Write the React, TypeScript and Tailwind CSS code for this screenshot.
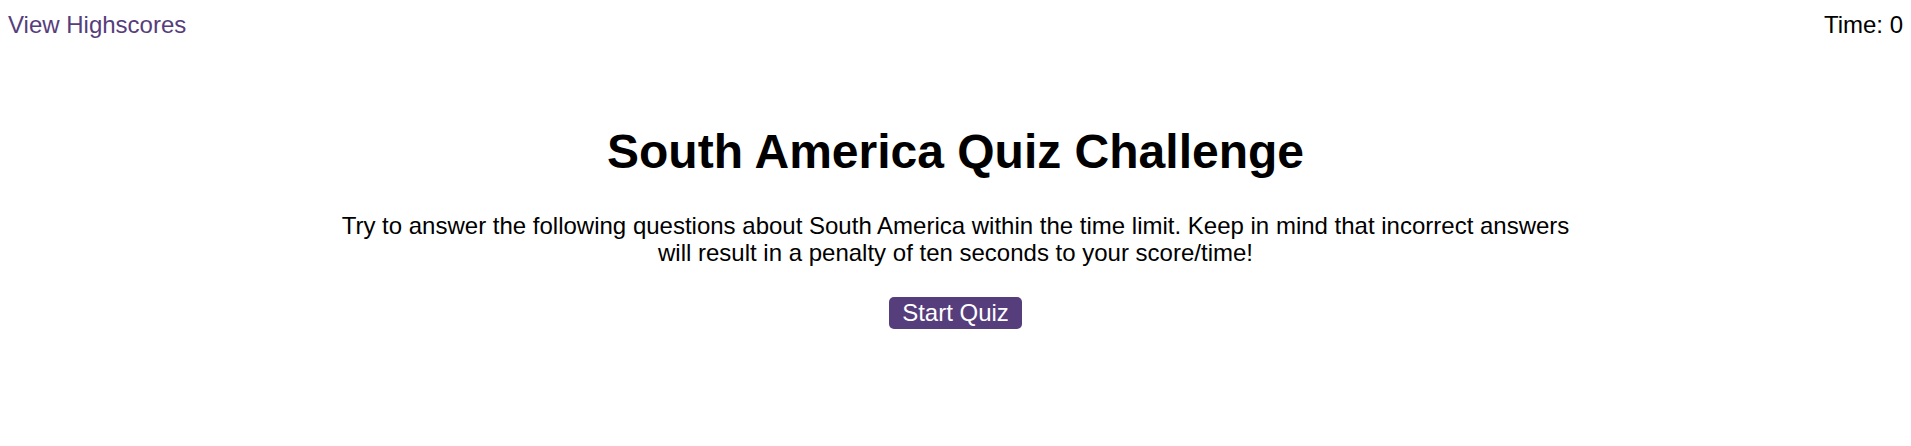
export default function App() {
  return (
    <div className="min-h-[446px] bg-white text-black" style={{ fontFamily: '"Liberation Sans", Arial, sans-serif' }}>
      <header className="flex justify-between pl-[8px] pr-[8px] pt-[11px] text-[24px] leading-[28px]">
        <a href="#" className="text-[#563d7c]">View Highscores</a>
        <span>Time: 0</span>
      </header>
      <main className="flex flex-col items-center">
        <h1 className="mt-[85px] text-[48px] leading-[55px] font-bold">South America Quiz Challenge</h1>
        <p className="mt-[33px] max-w-[1240px] text-center text-[24px] leading-[27px]">
          Try to answer the following questions about South America within the time limit. Keep in mind that incorrect answers will result in a penalty of ten seconds to your score/time!
        </p>
        <button className="mt-[31px] rounded-[5px] bg-[#563d7c] px-[13px] py-[2px] text-[24px] leading-[28px] text-white">
          Start Quiz
        </button>
      </main>
    </div>
  );
}
